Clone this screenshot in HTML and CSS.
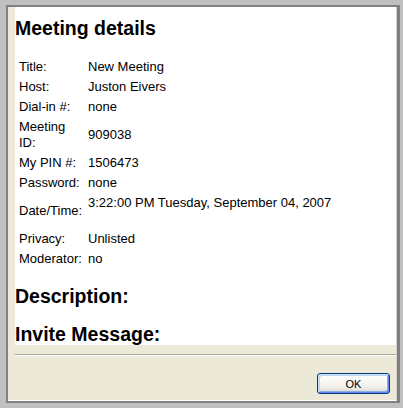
FILE: index.html
```html
<!DOCTYPE html>
<html>
<head>
<meta charset="utf-8">
<title>Meeting details</title>
<link rel="stylesheet" href="styles.css">
</head>
<body>
<div class="window">
  <div class="inner">
    <div class="content">
      <h1 class="heading first">Meeting details</h1>
      <table class="details">
        <tr><td class="label">Title:</td><td class="value">New Meeting</td></tr>
        <tr><td class="label">Host:</td><td class="value">Juston Eivers</td></tr>
        <tr><td class="label">Dial-in #:</td><td class="value">none</td></tr>
        <tr><td class="label">Meeting ID:</td><td class="value">909038</td></tr>
        <tr><td class="label">My PIN #:</td><td class="value">1506473</td></tr>
        <tr><td class="label">Password:</td><td class="value">none</td></tr>
        <tr><td class="label">Date/Time:</td><td class="value tall">3:22:00 PM Tuesday, September 04, 2007</td></tr>
        <tr><td class="label">Privacy:</td><td class="value">Unlisted</td></tr>
        <tr><td class="label">Moderator:</td><td class="value">no</td></tr>
      </table>
      <h2 class="heading">Description:</h2>
      <h2 class="heading">Invite Message:</h2>
    </div>
    <div class="footer">
      <div class="separator"></div>
      <div class="actions">
        <button class="btn" type="button">OK</button>
      </div>
    </div>
  </div>
</div>
</body>
</html>
```
FILE: styles.css
```css
html, body {
  margin: 0;
  padding: 0;
}
body {
  width: 403px;
  height: 408px;
  background: #c0c0c0;
  font-family: "Liberation Sans", Arial, sans-serif;
  color: #000;
  overflow: hidden;
}
.window {
  box-sizing: border-box;
  width: 394px;
  height: 398px;
  margin: 5px 0 0 6px;
  border: 2px solid #808080;
  border-right-width: 3px;
}
.inner {
  box-sizing: border-box;
  height: 100%;
  background: #ece9d8;
  border-right: 1px solid #d4d0c8;
  border-bottom: 1px solid #ffffff;
  display: flex;
  flex-direction: column;
}
.content {
  height: 338px;
  margin-left: 7px;
  background: #ffffff;
  overflow: hidden;
}
.heading {
  margin: 16px 0 0 0;
  font-size: 19.5px;
  line-height: 22px;
  font-weight: bold;
}
.heading.first {
  margin-top: 10px;
}
.details {
  margin: 18px 0 0 2px;
  border-collapse: collapse;
  font-size: 13px;
  line-height: 16px;
}
.details td {
  padding: 2px;
  vertical-align: middle;
}
.details td.label {
  width: 64px;
  padding-right: 3px;
}
.details td.tall {
  vertical-align: top;
  height: 32px;
}
.footer {
  flex: 1;
  padding-top: 9px;
}
.separator {
  border-top: 1px solid #aca899;
  border-bottom: 1px solid #ffffff;
  margin-left: 7px;
}
.actions {
  display: flex;
  justify-content: flex-end;
  padding: 17px 6px 0 0;
}
.btn {
  box-sizing: border-box;
  width: 73px;
  height: 21px;
  margin: 0;
  padding: 0;
  border: 1px solid #003c74;
  border-radius: 3px;
  background: linear-gradient(#ffffff, #f0f0ea 70%, #d6d0c5);
  box-shadow: inset 1px 1px 0 #cee7ff, inset -1px -1px 0 #6982ee, inset 2px 2px 0 #bcd4f6, inset -2px -2px 0 #89adE4;
  font-family: "Liberation Sans", Arial, sans-serif;
  font-size: 11px;
  color: #000;
}
```
